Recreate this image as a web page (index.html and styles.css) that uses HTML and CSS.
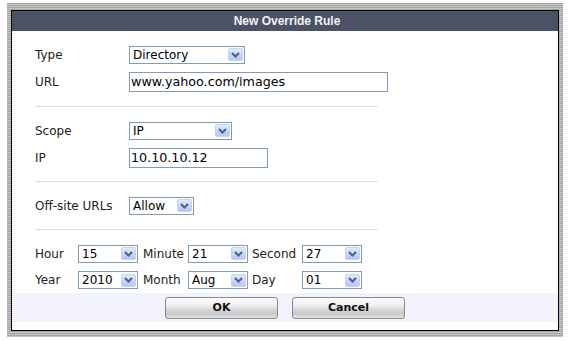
FILE: index.html
```html
<!DOCTYPE html>
<html>
<head>
<meta charset="utf-8">
<title>New Override Rule</title>
<link rel="stylesheet" href="styles.css">
</head>
<body>
<div class="frame">
  <div class="dialog">
    <div class="title">New Override Rule</div>
    <div class="section s1">
      <div class="row">
        <span class="lbl">Type</span>
        <div class="sel w116"><span class="val">Directory</span><span class="arr"><svg width="13" height="12" viewBox="0 0 13 12"><path d="M3 4 L6.5 7.5 L10 4" fill="none" stroke="#4d6185" stroke-width="2"/></svg></span></div>
      </div>
      <div class="row">
        <span class="lbl">URL</span>
        <input class="inp w259" type="text" value="www.yahoo.com/images">
      </div>
    </div>
    <div class="sep"></div>
    <div class="section">
      <div class="row">
        <span class="lbl">Scope</span>
        <div class="sel w103"><span class="val">IP</span><span class="arr"><svg width="13" height="12" viewBox="0 0 13 12"><path d="M3 4 L6.5 7.5 L10 4" fill="none" stroke="#4d6185" stroke-width="2"/></svg></span></div>
      </div>
      <div class="row">
        <span class="lbl">IP</span>
        <input class="inp w139" type="text" value="10.10.10.12">
      </div>
    </div>
    <div class="sep"></div>
    <div class="section">
      <div class="row">
        <span class="lbl">Off-site URLs</span>
        <div class="sel w65"><span class="val">Allow</span><span class="arr"><svg width="13" height="12" viewBox="0 0 13 12"><path d="M3 4 L6.5 7.5 L10 4" fill="none" stroke="#4d6185" stroke-width="2"/></svg></span></div>
      </div>
    </div>
    <div class="sep"></div>
    <div class="dates">
      <span>Hour</span>
      <div class="sel w60"><span class="val">15</span><span class="arr"><svg width="13" height="12" viewBox="0 0 13 12"><path d="M3 4 L6.5 7.5 L10 4" fill="none" stroke="#4d6185" stroke-width="2"/></svg></span></div>
      <span>Minute</span>
      <div class="sel w60"><span class="val">21</span><span class="arr"><svg width="13" height="12" viewBox="0 0 13 12"><path d="M3 4 L6.5 7.5 L10 4" fill="none" stroke="#4d6185" stroke-width="2"/></svg></span></div>
      <span>Second</span>
      <div class="sel w60"><span class="val">27</span><span class="arr"><svg width="13" height="12" viewBox="0 0 13 12"><path d="M3 4 L6.5 7.5 L10 4" fill="none" stroke="#4d6185" stroke-width="2"/></svg></span></div>
      <span>Year</span>
      <div class="sel w60"><span class="val">2010</span><span class="arr"><svg width="13" height="12" viewBox="0 0 13 12"><path d="M3 4 L6.5 7.5 L10 4" fill="none" stroke="#4d6185" stroke-width="2"/></svg></span></div>
      <span>Month</span>
      <div class="sel w60"><span class="val">Aug</span><span class="arr"><svg width="13" height="12" viewBox="0 0 13 12"><path d="M3 4 L6.5 7.5 L10 4" fill="none" stroke="#4d6185" stroke-width="2"/></svg></span></div>
      <span>Day</span>
      <div class="sel w60"><span class="val">01</span><span class="arr"><svg width="13" height="12" viewBox="0 0 13 12"><path d="M3 4 L6.5 7.5 L10 4" fill="none" stroke="#4d6185" stroke-width="2"/></svg></span></div>
    </div>
    <div class="btnbar">
      <button class="btn">OK</button>
      <button class="btn">Cancel</button>
    </div>
  </div>
</div>
</body>
</html>
```
FILE: styles.css
```css
html, body {
  margin: 0;
  padding: 0;
  background: #ffffff;
}
body {
  font-family: Verdana, "DejaVu Sans", sans-serif;
  font-size: 12px;
  color: #222;
}
.frame {
  margin: 3px 0 0 7px;
  width: 556px;
  box-sizing: border-box;
  padding: 7px 4px 6px 4px;
  background: repeating-linear-gradient(to bottom, #a3a3a3 0, #a3a3a3 1px, #c6c6c6 1px, #c6c6c6 2px);
}
.dialog {
  border: 1px solid #000;
  background: #fff;
  padding-bottom: 8px;
}
.title {
  height: 20px;
  line-height: 20px;
  background: #4b5266;
  color: #f2f2f2;
  text-align: center;
  font-family: Tahoma, "Liberation Sans", Arial, sans-serif;
  font-weight: bold;
  font-size: 12px;
  padding-left: 4px;
}
.section {
  padding: 10px 0 10px 23px;
}
.s1 {
  padding-bottom: 11px;
}
.row {
  display: flex;
  align-items: center;
  height: 27px;
}
.lbl {
  width: 94px;
  flex: none;
}
.sep {
  margin-left: 23px;
  width: 343px;
  height: 1px;
  background: #dedede;
}
.sel {
  display: flex;
  align-items: center;
  box-sizing: border-box;
  height: 18px;
  border: 1px solid #7f9db9;
  padding: 0 1px 0 3px;
  background: #fff;
  color: #000;
}
.val {
  flex: 1;
  white-space: nowrap;
  overflow: hidden;
  line-height: 16px;
}
.arr {
  flex: none;
  width: 15px;
  height: 13px;
  box-sizing: border-box;
  border: 1px solid #c4d3f6;
  border-radius: 2px;
  background: linear-gradient(to bottom, #e2eafd 0%, #c9d7f9 50%, #b5c7f3 100%);
  display: flex;
  align-items: center;
  justify-content: center;
}
.arr svg {
  display: block;
}
.inp {
  box-sizing: border-box;
  height: 20px;
  border: 1px solid #7f9db9;
  padding: 0 1px;
  margin: 0;
  font-family: Verdana, "DejaVu Sans", sans-serif;
  font-size: 12.7px;
  color: #000;
  outline: none;
}
.w116 { width: 116px; }
.w103 { width: 103px; }
.w65 { width: 65px; }
.w60 { width: 60px; }
.w259 { width: 259px; }
.w139 { width: 139px; }
.dates {
  display: grid;
  grid-template-columns: 43px 65px 45px 64px 50px 60px;
  grid-template-rows: 27px 26px;
  align-items: center;
  padding: 10px 0 0 23px;
}
.btnbar {
  background: #f2f3fc;
  height: 29px;
  display: flex;
  justify-content: center;
  align-items: center;
  gap: 14px;
}
.btn {
  width: 113px;
  height: 22px;
  margin: 0;
  padding: 0;
  border: 1px solid #8a8a8a;
  border-radius: 3px;
  background: linear-gradient(to bottom, #fdfdfd 0%, #f0f0f0 35%, #d6d6d6 60%, #c9c9c9 78%, #e2e2e2 100%);
  font-family: Verdana, "DejaVu Sans", sans-serif;
  font-weight: bold;
  font-size: 11px;
  color: #111;
}
```
